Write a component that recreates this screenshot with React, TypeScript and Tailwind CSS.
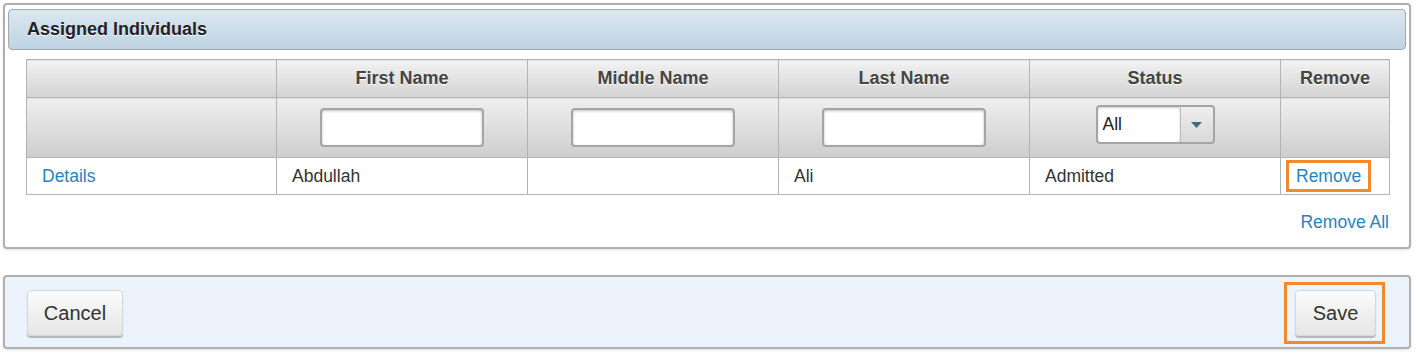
import React from 'react';

const cols = [250, 251, 251, 251, 251, 109];

function FilterInput() {
  return (
    <input
      type="text"
      className="h-[39px] w-[164px] rounded-[4px] border-2 border-[#a5a5a5] bg-white shadow-[inset_0_1px_3px_rgba(0,0,0,0.25)] outline-none"
    />
  );
}

function StatusSelect() {
  return (
    <div className="inline-flex h-[39px] w-[119px] rounded-[4px] border-2 border-[#a5a5a5] bg-gradient-to-b from-[#eeeeee] to-[#d9d9d9]">
      <div className="flex w-[82px] items-center rounded-[3px] bg-white pl-[5px] text-[17.5px] text-[#222] shadow-[inset_0_1px_2px_rgba(0,0,0,0.2)]">
        All
      </div>
      <div className="flex flex-1 items-center justify-center border-l border-[#bbb]">
        <svg width="11" height="6" viewBox="0 0 11 6">
          <path d="M0 0 L11 0 L5.5 6 Z" fill="#3e6b86" />
        </svg>
      </div>
    </div>
  );
}

export default function App() {
  const th =
    'border border-[#b3b3b3] bg-gradient-to-b from-[#f2f2f2] to-[#d3d3d3] text-center text-[18px] font-bold text-[#444] [text-shadow:0_1px_0_#fff]';
  const fc = 'border border-[#b3b3b3] bg-gradient-to-b from-[#efefef] to-[#cecece] text-center align-middle';
  const td = 'border border-[#b3b3b3] bg-white px-[15px] text-left text-[17.5px] text-[#333]';

  return (
    <div className="min-h-[355px] bg-white pt-[3px] font-['Liberation_Sans',Arial,sans-serif]">
      {/* Assigned individuals panel */}
      <div className="ml-[3px] w-[1408px] rounded-[4px] border-2 border-[#b0b0b0] bg-white px-[3px] pt-[4px] pb-[12px] shadow-[0_1px_3px_rgba(0,0,0,0.12)]">
        <div className="flex h-[41px] items-center rounded-[4px] border border-[#a3a9ad] bg-gradient-to-b from-[#dbe8f1] to-[#bed3e2] pl-[18px] text-[18px] font-bold text-[#222] [text-shadow:0_1px_0_#fff]">
          Assigned Individuals
        </div>

        <div className="ml-[18px] mt-[9px]">
          <table className="w-[1363px] table-fixed border-collapse">
            <colgroup>
              {cols.map((w, i) => (
                <col key={i} style={{ width: w }} />
              ))}
            </colgroup>
            <thead>
              <tr className="h-[38px]">
                <th className={th}></th>
                <th className={th}>First Name</th>
                <th className={th}>Middle Name</th>
                <th className={th}>Last Name</th>
                <th className={th}>Status</th>
                <th className={th}>Remove</th>
              </tr>
              <tr className="h-[60px]">
                <td className={fc}></td>
                <td className={fc}>
                  <FilterInput />
                </td>
                <td className={fc}>
                  <FilterInput />
                </td>
                <td className={fc}>
                  <FilterInput />
                </td>
                <td className={fc}>
                  <div className="-mt-[6px]">
                    <StatusSelect />
                  </div>
                </td>
                <td className={fc}></td>
              </tr>
            </thead>
            <tbody>
              <tr className="h-[37px]">
                <td className={td}>
                  <a className="text-[#1f84c6]">Details</a>
                </td>
                <td className={td}>Abdullah</td>
                <td className={td}></td>
                <td className={td}>Ali</td>
                <td className={td}>Admitted</td>
                <td className="border border-[#b3b3b3] bg-white px-[5px] text-[17.5px]">
                  <span className="inline-block border-[3px] border-[#f28a2a] px-[7px] py-[3px] leading-[20px] text-[#1f84c6]">
                    Remove
                  </span>
                </td>
              </tr>
            </tbody>
          </table>

          <div className="mt-[14px] flex w-[1363px] justify-end text-[17.5px] text-[#1f84c6]">
            <a>Remove All</a>
          </div>
        </div>
      </div>

      {/* Footer actions */}
      <div className="ml-[3px] mt-[26px] flex h-[74px] w-[1408px] items-start justify-between rounded-[4px] border-2 border-[#b0b0b0] bg-[#edf3fc] pl-[22px] pr-[24px] pt-[13px] shadow-[0_1px_3px_rgba(0,0,0,0.12)]">
        <button className="h-[46px] w-[96px] rounded-[4px] border border-[#d6d6d6] bg-gradient-to-b from-[#fbfbfb] to-[#e6e6e6] text-[20px] text-[#333] shadow-[0_2px_1px_rgba(0,0,0,0.25)]">
          Cancel
        </button>
        <div className="-mt-[8px] border-[3px] border-[#f28a2a] py-[5px] pl-[8px] pr-[6px]">
          <button className="h-[46px] w-[81px] rounded-[4px] border border-[#d6d6d6] bg-gradient-to-b from-[#fbfbfb] to-[#e6e6e6] text-[20px] text-[#333] shadow-[0_2px_1px_rgba(0,0,0,0.25)]">
            Save
          </button>
        </div>
      </div>
    </div>
  );
}
